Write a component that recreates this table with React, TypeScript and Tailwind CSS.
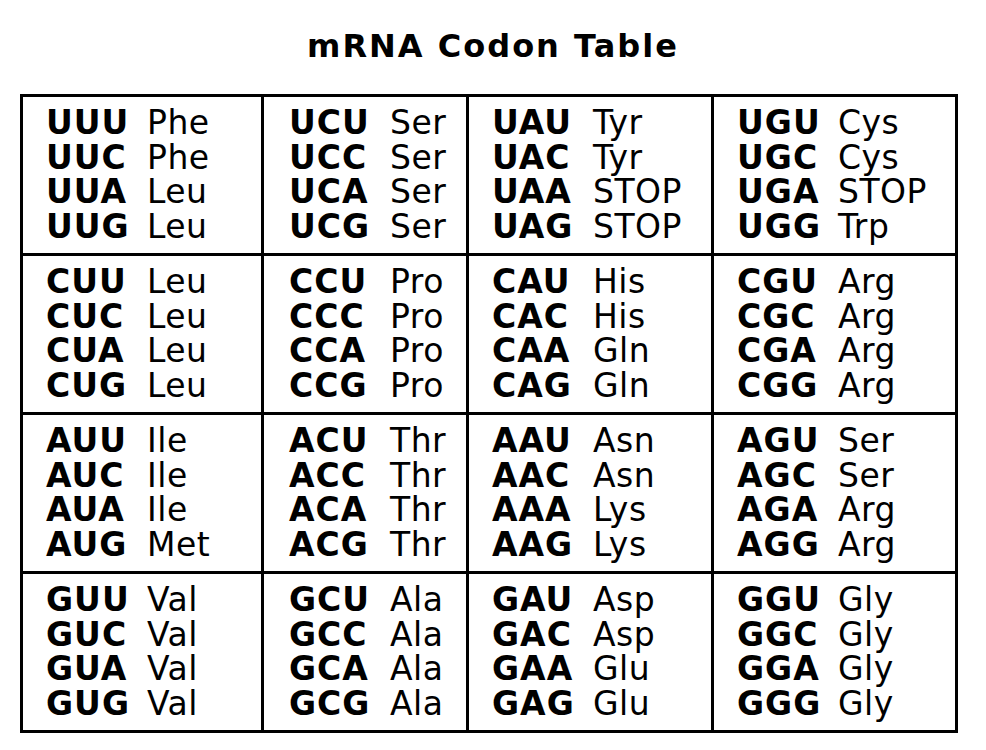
import React from "react";

const rows: [string, string][][][] = [
  [
    [["UUU", "Phe"], ["UUC", "Phe"], ["UUA", "Leu"], ["UUG", "Leu"]],
    [["UCU", "Ser"], ["UCC", "Ser"], ["UCA", "Ser"], ["UCG", "Ser"]],
    [["UAU", "Tyr"], ["UAC", "Tyr"], ["UAA", "STOP"], ["UAG", "STOP"]],
    [["UGU", "Cys"], ["UGC", "Cys"], ["UGA", "STOP"], ["UGG", "Trp"]],
  ],
  [
    [["CUU", "Leu"], ["CUC", "Leu"], ["CUA", "Leu"], ["CUG", "Leu"]],
    [["CCU", "Pro"], ["CCC", "Pro"], ["CCA", "Pro"], ["CCG", "Pro"]],
    [["CAU", "His"], ["CAC", "His"], ["CAA", "Gln"], ["CAG", "Gln"]],
    [["CGU", "Arg"], ["CGC", "Arg"], ["CGA", "Arg"], ["CGG", "Arg"]],
  ],
  [
    [["AUU", "Ile"], ["AUC", "Ile"], ["AUA", "Ile"], ["AUG", "Met"]],
    [["ACU", "Thr"], ["ACC", "Thr"], ["ACA", "Thr"], ["ACG", "Thr"]],
    [["AAU", "Asn"], ["AAC", "Asn"], ["AAA", "Lys"], ["AAG", "Lys"]],
    [["AGU", "Ser"], ["AGC", "Ser"], ["AGA", "Arg"], ["AGG", "Arg"]],
  ],
  [
    [["GUU", "Val"], ["GUC", "Val"], ["GUA", "Val"], ["GUG", "Val"]],
    [["GCU", "Ala"], ["GCC", "Ala"], ["GCA", "Ala"], ["GCG", "Ala"]],
    [["GAU", "Asp"], ["GAC", "Asp"], ["GAA", "Glu"], ["GAG", "Glu"]],
    [["GGU", "Gly"], ["GGC", "Gly"], ["GGA", "Gly"], ["GGG", "Gly"]],
  ],
];

function Cell({ items, col }: { items: [string, string][]; col: number }) {
  return (
    <div className={col === 1 ? "bg-white pl-[25px] pt-[9px]" : "bg-white pl-[23px] pt-[9px]"}>
      {items.map(([codon, aa]) => (
        <div key={codon} className="flex h-[34.5px] text-[33px] leading-[34.5px] text-black">
          <span className="w-[101px] font-bold tracking-[1px]">{codon}</span>
          <span className="tracking-[0.5px]">{aa}</span>
        </div>
      ))}
    </div>
  );
}

export default function App() {
  return (
    <div
      className="w-[986px] h-[750px] bg-white overflow-hidden"
      style={{ fontFamily: '"DejaVu Sans", Verdana, sans-serif' }}
    >
      <h1 className="pt-[26px] h-[94px] text-center text-[32px] font-bold leading-[40px] tracking-[2px] text-black">
        mRNA Codon Table
      </h1>
      <div className="ml-[20px] w-[938px] bg-black p-[3px] grid grid-cols-[238px_202px_242px_241px] grid-rows-[156px_156px_156px_156px] gap-[3px]">
        {rows.map((row) =>
          row.map((cell, ci) => <Cell key={cell[0][0]} items={cell} col={ci} />)
        )}
      </div>
    </div>
  );
}
